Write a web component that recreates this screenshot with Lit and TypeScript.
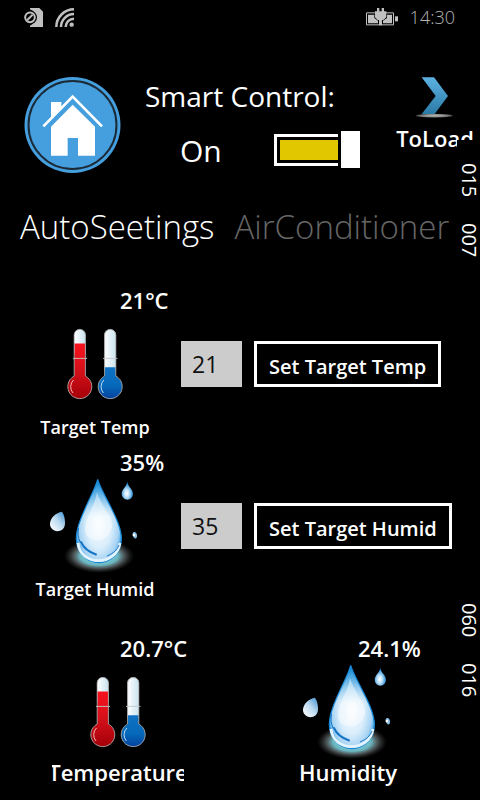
import { LitElement, html, css, svg } from "lit";
import { customElement, property, state } from "lit/decorators.js";

const simIcon = svg`
  <svg width="19" height="19" viewBox="0 0 57 57" aria-hidden="true">
    <path fill="#c0c0c0" d="M18 0H46L57 11V57H18V53A27 27 0 0 0 18 4Z"/>
    <circle cx="18" cy="28" r="21" fill="#000"/>
    <circle cx="18" cy="28" r="14.500" fill="none" stroke="#c0c0c0" stroke-width="6"/>
    <path d="M10 36L26 20" stroke="#c0c0c0" stroke-width="6"/>
  </svg>`;

const wifiIcon = svg`
  <svg width="19" height="19" viewBox="0 0 57 57" aria-hidden="true">
    <g fill="none" stroke="#c0c0c0" stroke-width="7.500">
      <path d="M4 57A53 53 0 0 1 57 4"/>
      <path d="M18 57A39 39 0 0 1 57 18"/>
      <path d="M32 57A25 25 0 0 1 57 32"/>
    </g>
    <circle cx="50" cy="50" r="6.500" fill="#c0c0c0"/>
  </svg>`;

const batteryIcon = svg`
  <svg width="32" height="18" viewBox="0 0 96 54" aria-hidden="true">
    <path fill="none" stroke="#c0c0c0" stroke-width="3" d="M30 14.500H1.500V50.500H82.500V14.500H58"/>
    <path fill="#c0c0c0" d="M6 20H25V30L36 38V46H6ZM63 20H78V46H51V38L63 30Z"/>
    <path fill="#c0c0c0" d="M87 25H96V40H87Z"/>
    <path fill="#c0c0c0" d="M33 0H40V10H47V0H54V10H61V28L52 36H48V52H39V36H35L27 28V10H33Z"/>
  </svg>`;

const homeIcon = svg`
  <svg width="97" height="96" viewBox="0 0 291 288" aria-hidden="true">
    <circle cx="145.500" cy="144" r="144" fill="#459fde"/>
    <circle cx="145.500" cy="144" r="132" fill="none" stroke="#1b2a36" stroke-width="6"/>
    <path fill="none" stroke="#fff" stroke-width="8" d="M58 148L146 59L234 148"/>
    <path fill="#fff" d="M81 75H112V93L81 124Z"/>
    <path fill="#fff" d="M146 83L213 149V236H162V183H131V236H81V149Z"/>
  </svg>`;

const arrowIcon = svg`
  <svg width="38" height="42" viewBox="0 0 114 126" aria-hidden="true">
    <defs>
      <linearGradient id="arrow" x1="0" y1="0" x2="0" y2="1">
        <stop offset="0" stop-color="#5db1e2"/><stop offset="1" stop-color="#2a7aa6"/>
      </linearGradient>
      <radialGradient id="floor">
        <stop offset="0" stop-color="#b8b8b8"/><stop offset="0.600" stop-color="#8d8d8d"/>
        <stop offset="1" stop-color="#444"/>
      </radialGradient>
    </defs>
    <ellipse cx="55" cy="116" rx="55" ry="6" fill="url(#floor)"/>
    <path fill="url(#arrow)" d="M17 1H54L96 57L56 111H17L59 57Z"/>
  </svg>`;

const thermometerIcon = svg`
  <svg class="icon" viewBox="0 0 100 100" aria-hidden="true">
    <defs>
      <linearGradient id="glass"><stop offset="0" stop-color="#fff"/><stop offset="1" stop-color="#c9e3ef"/></linearGradient>
      <linearGradient id="hot" x1="0" y1="0" x2="0" y2="1">
        <stop offset="0" stop-color="#f8121d"/><stop offset="0.500" stop-color="#d3101a"/><stop offset="1" stop-color="#a40008"/>
      </linearGradient>
      <linearGradient id="cold" x1="0" y1="0" x2="0" y2="1">
        <stop offset="0" stop-color="#0f72c4"/><stop offset="0.600" stop-color="#0568b8"/><stop offset="1" stop-color="#053f9e"/>
      </linearGradient>
    </defs>
    <path fill="url(#glass)" d="M29 40V21A5.800 5.800 0 0 1 40.600 21V40Z"/>
    <path fill="url(#hot)" d="M29.200 29.600H40.400V62.200A12 12 0 1 1 29.200 62.200Z"/>
    <path fill="none" stroke="#a9a9a9" stroke-width="0.900" d="M29.200 62V21A5.600 5.600 0 0 1 40.400 21V62A12 12 0 1 1 29.200 62"/>
    <path stroke="#c7c7c7" stroke-width="0.900" d="M28 44.400H42"/>
    <path fill="none" stroke="#f6b4b4" stroke-width="1" d="M28.500 66A9.500 9.500 0 0 0 28 79"/>
    <path fill="url(#glass)" d="M59.400 56V21A5.800 5.800 0 0 1 71 21V56Z"/>
    <path fill="url(#cold)" d="M59.600 53.300H70.800V62.200A12 12 0 1 1 59.600 62.200Z"/>
    <path fill="none" stroke="#a9a9a9" stroke-width="0.900" d="M59.600 62V21A5.600 5.600 0 0 1 70.800 21V62A12 12 0 1 1 59.600 62"/>
    <path stroke="#c7c7c7" stroke-width="0.900" d="M58 44.400H72.400"/>
    <path fill="none" stroke="#b9dcf6" stroke-width="1" d="M58.900 66A9.500 9.500 0 0 0 58.400 79"/>
  </svg>`;

const dropIcon = svg`
  <svg class="icon" viewBox="0 0 100 100" aria-hidden="true">
    <defs>
      <radialGradient id="glow">
        <stop offset="0" stop-color="#8feaf5"/><stop offset="0.550" stop-color="#76c8d4" stop-opacity="0.900"/>
        <stop offset="0.750" stop-color="#8a9699" stop-opacity="0.500"/><stop offset="1" stop-color="#555" stop-opacity="0"/>
      </radialGradient>
      <radialGradient id="body" cx="0.500" cy="0.550" r="0.560">
        <stop offset="0" stop-color="#fafdff"/><stop offset="0.500" stop-color="#d9edfb"/>
        <stop offset="0.800" stop-color="#a4d2f3"/><stop offset="1" stop-color="#1a8fdc"/>
      </radialGradient>
      <linearGradient id="tip" x1="0" y1="0" x2="0" y2="1">
        <stop offset="0" stop-color="#0b86d3"/><stop offset="0.450" stop-color="#5fb4ea" stop-opacity="0"/>
      </linearGradient>
      <linearGradient id="side" x1="1" y1="0" x2="0.100" y2="1">
        <stop offset="0" stop-color="#3d8fd0"/><stop offset="0.500" stop-color="#bcdaf0"/><stop offset="1" stop-color="#fff"/>
      </linearGradient>
      <radialGradient id="bead" cx="0.450" cy="0.650" r="0.600">
        <stop offset="0" stop-color="#fff"/><stop offset="0.350" stop-color="#c2e4fa"/><stop offset="1" stop-color="#0a78c8"/>
      </radialGradient>
    </defs>
    <ellipse cx="54" cy="80" rx="35" ry="17" fill="url(#glow)"/>
    <path fill="url(#body)" stroke="#1687d6" stroke-width="1.200" d="M52.700 3.500C56 17 76.400 44 76.400 62.500A22.500 24 0 0 1 31.300 62.500C31.300 44 49.500 17 52.700 3.500Z"/>
    <path fill="url(#tip)" d="M52.700 3.500C56 17 76.400 44 76.400 62.500A22.500 24 0 0 1 31.300 62.500C31.300 44 49.500 17 52.700 3.500Z"/>
    <path fill="#fff" opacity="0.450" d="M52 16C50 30 40 42 40 54C41 62 48 64 52 64C62 64 67 56 67 49C67 40 56 30 52 16Z"/>
    <path fill="none" stroke="#e4f4ff" stroke-width="2.800" d="M33 67C35 90 71 91 75 67"/>
    <path fill="none" stroke="#1674c4" stroke-width="2" stroke-linecap="round" d="M36 66C39 73 44 76 51 78.500"/>
    <path fill="none" stroke="#1674c4" stroke-width="1" d="M33.500 52C32.500 58 33 61 35 66M62 80C69 77 72 74 74 69"/>
    <path fill="url(#bead)" d="M82.300 5.700C83 11 88 13 88 18A5.600 5.600 0 0 1 76.700 18C76.700 13 81.600 11 82.300 5.700Z"/>
    <path fill="url(#side)" d="M17 35.700C19.500 39 20.200 44 20 48C19.500 53 16 55.200 12.500 55.200C8 55.200 4.800 51.500 5 47.500C5.500 41 11 37 17 35.700Z"/>
    <path fill="#8fc0e4" d="M89 56C91.500 56 92.300 58.500 92 60.500C91.700 62.800 90 63 89 61.500C87.500 60.500 86.500 57 89 56Z"/>
    <circle cx="89" cy="59" r="1.200" fill="#fff"/>
  </svg>`;

const icons = { temperature: thermometerIcon, humidity: dropIcon };

@customElement("sensor-tile")
class SensorTile extends LitElement {
  @property() kind: keyof typeof icons = "temperature";
  @property() value = "";
  @property() label = "";
  @property({ type: Boolean, reflect: true }) large = false;

  static styles = css`
    :host { display: flex; flex-direction: column; width: 150px; color: #fff; font-weight: 600; }
    :host([large]) { width: 132px; }
    .value { font-size: 22px; line-height: 24px; white-space: nowrap; padding-left: 100px; }
    :host([large]) .value { padding-left: 68px; }
    :host([large][kind="humidity"]) .value { padding-left: 76px; }
    .icon { display: block; width: 100px; height: 100px; margin-top: 2px; align-self: center; }
    .label { display: flex; justify-content: center; white-space: nowrap; font-size: 18px; line-height: 26px; }
    :host([large]) .label { font-size: 22px; line-height: 20px; overflow-x: clip; }
  `;

  render() {
    return html`
      <div class="value">${this.value}</div>
      ${icons[this.kind]}
      <div class="label">${this.label}</div>
    `;
  }
}

@customElement("app-root")
class AppRoot extends LitElement {
  @state() private smart = true;

  private targets = [
    { kind: "temperature", value: "21°C", label: "Target Temp", entry: "21" },
    { kind: "humidity", value: "35%", label: "Target Humid", entry: "35" },
  ];

  static styles = css`
    *, *::before, *::after { box-sizing: border-box; }
    :host {
      display: block; position: relative; min-height: 100vh;
      background: #000; color: #fff; font-family: "Open Sans", "Noto Sans", sans-serif;
    }
    button, input { font: inherit; color: inherit; margin: 0; border-radius: 0; }
    svg { display: block; }
    .status { display: flex; align-items: center; gap: 12px; height: 34px; padding: 0 25px 0 24px; color: #b4b4b4; }
    .battery { margin-left: auto; }
    .time { font-size: 18px; line-height: 24px; font-weight: 300; }
    .header { display: flex; align-items: flex-start; padding: 43px 5px 0 24px; }
    .control { flex: 1; padding-left: 24px; }
    .title { display: block; font-size: 28px; line-height: 38px; font-weight: 400; white-space: nowrap; }
    .power { display: flex; align-items: flex-start; gap: 54px; padding: 16px 0 0 35px; }
    .power-text { font-size: 30px; line-height: 40px; width: 40px; }
    .switch {
      appearance: none; width: 86px; height: 37px; display: flex; align-items: center; cursor: pointer;
    }
    .switch::before {
      content: ""; width: 64px; height: 32px; border: 3px solid #fff; border-right: 0;
      background: #e0c700 content-box; padding: 3px 0 3px 3px;
    }
    .switch:not(:checked)::before { background: none; }
    .switch::after { content: ""; width: 19px; height: 37px; margin-left: 3px; background: #fff; }
    .load {
      display: flex; flex-direction: column; align-items: center; border: 0; padding: 0; background: none;
      font-size: 22px; line-height: 38px; font-weight: 600; width: 80px;
    }
    .tabs { display: flex; gap: 20px; padding: 24px 20px 0; }
    .tab { border: 0; padding: 0; background: none; font-size: 33px; line-height: 60px; font-weight: 300; white-space: nowrap; color: #666; }
    .tab[aria-selected="true"] { color: #fff; }
    .targets { display: grid; gap: 10px; padding: 31px 20px 0; }
    .target { display: flex; align-items: center; }
    .entry { width: 61px; height: 46px; margin-left: 11px; padding: 0 11px; border: 0; background: #ccc; color: #111; font-size: 23px; }
    .set { height: 46px; margin-left: 12px; padding: 4px 12px 0; border: 3px solid #fff; background: #000; font-size: 20px; font-weight: 600; white-space: nowrap; }
    .readings { display: grid; grid-template-columns: 1fr 1fr; justify-items: center; padding: 34px 17px 0 3px; }
    .counters {
      position: absolute; right: 0; display: flex; gap: 26px; writing-mode: vertical-rl; width: 23px; padding-top: 23px;
      background: #000; font-size: 20px; line-height: 22px; font-weight: 500;
    }
    .upper { top: 140px; }
    .lower { top: 580px; }
  `;

  render() {
    return html`
      <div class="status">
        ${simIcon}${wifiIcon}
        <span class="battery">${batteryIcon}</span>
        <span class="time">14:30</span>
      </div>
      <header class="header">
        ${homeIcon}
        <div class="control">
          <label class="title" for="smart">Smart Control:</label>
          <div class="power">
            <span class="power-text">${this.smart ? "On" : "Off"}</span>
            <input class="switch" id="smart" type="checkbox" role="switch" .checked=${this.smart}
              @change=${(e: Event) => (this.smart = (e.target as HTMLInputElement).checked)}>
          </div>
        </div>
        <button class="load">${arrowIcon}<span>ToLoad</span></button>
      </header>
      <div class="tabs" role="tablist">
        <button class="tab" role="tab" aria-selected="true">AutoSeetings</button>
        <button class="tab" role="tab" aria-selected="false">AirConditioner</button>
      </div>
      <main>
        <div class="targets">
          ${this.targets.map((t) => html`
            <div class="target">
              <sensor-tile kind=${t.kind} value=${t.value} label=${t.label}></sensor-tile>
              <input class="entry" type="text" inputmode="numeric" aria-label=${t.label} .value=${t.entry}>
              <button class="set">Set ${t.label}</button>
            </div>`)}
        </div>
        <div class="readings">
          <sensor-tile large kind="temperature" value="20.7°C" label="Temperature"></sensor-tile>
          <sensor-tile large kind="humidity" value="24.1%" label="Humidity"></sensor-tile>
        </div>
      </main>
      <div class="counters upper"><span>015</span><span>007</span></div>
      <div class="counters lower"><span>060</span><span>016</span></div>
    `;
  }
}
